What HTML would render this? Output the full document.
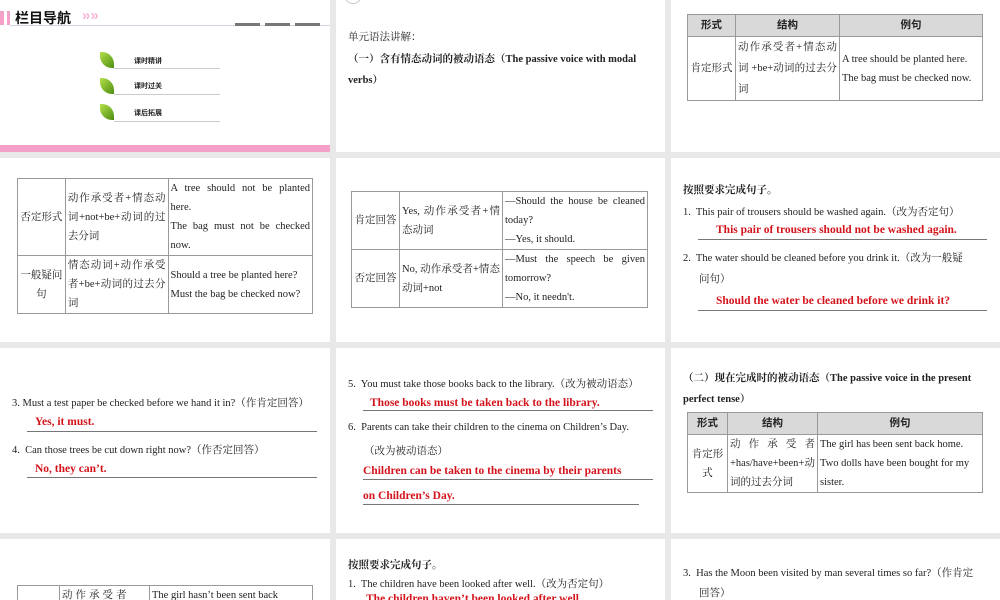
<!DOCTYPE html>
<html><head><meta charset="utf-8"><style>
*{margin:0;padding:0;box-sizing:border-box}
body{width:1000px;height:600px;background:#e9e8e9;position:relative;overflow:hidden;font-family:"Liberation Serif","Noto Serif CJK SC",serif;font-size:10.5px;color:#222}
.s{position:absolute;background:#fff;overflow:hidden}
.a{position:absolute;white-space:nowrap}
.r{color:#d4141c;font-weight:bold;font-size:11.5px}
.ul{position:absolute;height:1px;background:#777}
table{position:absolute;border-collapse:collapse;font-size:10.5px;line-height:19px}
td{border:1px solid #999;padding:0 2px;vertical-align:middle}
td.j{text-align:justify}
th{border:1px solid #999;background:#d9d9d9;font-weight:bold;font-family:"Liberation Sans","Noto Sans CJK SC",sans-serif;font-size:10.5px;height:22px}
.b{font-weight:bold}
.leaf{position:absolute;width:14px;height:16px;background:linear-gradient(135deg,#b4e04a,#4e8e12);border-radius:0 12px 0 12px}
.nav{position:absolute;left:114px;width:106px;height:1px;background:#ccc}
.nt{position:absolute;left:134px;font-size:7px;font-weight:bold;font-family:"Noto Sans CJK SC",sans-serif}
</style></head><body>

<!-- row1 -->
<div class="s" style="left:0;top:0;width:330px;height:152px">
  <div style="position:absolute;left:0;top:11px;width:4px;height:14px;background:#f5a0c8"></div>
  <div style="position:absolute;left:7px;top:11px;width:3px;height:14px;background:#f5a0c8"></div>
  <div class="a" style="left:15px;top:8px;font-family:'Liberation Sans','Noto Sans CJK SC',sans-serif;font-size:14px;font-weight:bold;color:#111">栏目导航</div>
  <div class="a" style="left:82px;top:7px;font-family:'Liberation Sans',sans-serif;font-size:15px;color:#f7b6d6;font-weight:bold">»»</div>
  <div style="position:absolute;left:10px;top:25px;width:320px;height:1px;background:#cfd6e0"></div>
  <div style="position:absolute;left:235px;top:23px;width:25px;height:3px;background:#777"></div>
  <div style="position:absolute;left:265px;top:23px;width:25px;height:3px;background:#777"></div>
  <div style="position:absolute;left:295px;top:23px;width:25px;height:3px;background:#777"></div>
  <div class="leaf" style="left:100px;top:52px"></div><div class="nt" style="top:56px">课时精讲</div><div class="nav" style="top:68px"></div>
  <div class="leaf" style="left:100px;top:78px"></div><div class="nt" style="top:81px">课时过关</div><div class="nav" style="top:94px"></div>
  <div class="leaf" style="left:100px;top:104px"></div><div class="nt" style="top:108px">课后拓展</div><div class="nav" style="top:121px"></div>
  <div style="position:absolute;left:0;top:145px;width:330px;height:7px;background:#f5a0c8"></div>
</div>
<div class="s" style="left:336px;top:0;width:329px;height:152px">
  <div style="position:absolute;left:8px;top:-14px;width:18px;height:18px;border-radius:50%;border:1px solid #ccc"></div>
  <div class="a" style="left:12px;top:29px">单元语法讲解：</div>
  <div class="a b" style="left:12px;top:51px">（一）含有情态动词的被动语态（The passive voice with modal</div>
  <div class="a b" style="left:12px;top:72px">verbs）</div>
</div>
<div class="s" style="left:671px;top:0;width:329px;height:152px">
  <table style="left:16px;top:14px;width:296px">
    <tr><th style="width:48px">形式</th><th style="width:104px">结构</th><th>例句</th></tr>
    <tr><td style="text-align:center">肯定形式</td><td class="j" style="line-height:21px">动作承受者+情态动词 +be+动词的过去分词</td><td>A tree should be planted here.<br>The bag must be checked now.</td></tr>
  </table>
</div>

<!-- row2 -->
<div class="s" style="left:0;top:158px;width:330px;height:184px">
  <table style="left:17px;top:20px;width:296px">
    <tr><td style="width:48px;text-align:center">否定形式</td><td class="j" style="width:103px">动作承受者+情态动词+not+be+动词的过去分词</td><td class="j" style="width:145px">A tree should not be planted here.<br>The bag must not be checked now.</td></tr>
    <tr><td style="text-align:center">一般疑问句</td><td class="j">情态动词+动作承受者+be+动词的过去分词</td><td>Should a tree be planted here?<br>Must the bag be checked now?</td></tr>
  </table>
</div>
<div class="s" style="left:336px;top:158px;width:329px;height:184px">
  <table style="left:15px;top:33px;width:297px">
    <tr><td style="width:48px;text-align:center">肯定回答</td><td class="j" style="width:103px">Yes, 动作承受者+情态动词</td><td class="j">—Should the house be cleaned today?<br>—Yes, it should.</td></tr>
    <tr><td style="text-align:center">否定回答</td><td class="j">No, 动作承受者+情态动词+not</td><td class="j">—Must the speech be given tomorrow?<br>—No, it needn't.</td></tr>
  </table>
</div>
<div class="s" style="left:671px;top:158px;width:329px;height:184px">
  <div class="a b" style="left:12px;top:24px">按照要求完成句子。</div>
  <div class="a" style="left:12px;top:46px">1.&nbsp; This pair of trousers should be washed again.（改为否定句）</div>
  <div class="a r" style="left:45px;top:66px">This pair of trousers should not be washed again.</div>
  <div class="ul" style="left:27px;top:81px;width:289px"></div>
  <div class="a" style="left:12px;top:92px">2.&nbsp; The water should be cleaned before you drink it.（改为一般疑</div>
  <div class="a" style="left:28px;top:113px">问句）</div>
  <div class="a r" style="left:45px;top:137px">Should the water be cleaned before we drink it?</div>
  <div class="ul" style="left:27px;top:152px;width:289px"></div>
</div>

<!-- row3 -->
<div class="s" style="left:0;top:348px;width:330px;height:185px">
  <div class="a" style="left:12px;top:47px">3.&nbsp;Must a test paper be checked before we hand it in?（作肯定回答）</div>
  <div class="a r" style="left:35px;top:68px">Yes, it must.</div>
  <div class="ul" style="left:27px;top:83px;width:290px"></div>
  <div class="a" style="left:12px;top:94px">4.&nbsp; Can those trees be cut down right now?（作否定回答）</div>
  <div class="a r" style="left:35px;top:115px">No, they can’t.</div>
  <div class="ul" style="left:27px;top:129px;width:290px"></div>
</div>
<div class="s" style="left:336px;top:348px;width:329px;height:185px">
  <div class="a" style="left:12px;top:28px">5.&nbsp; You must take those books back to the library.（改为被动语态）</div>
  <div class="a r" style="left:34px;top:49px">Those books must be taken back to the library.</div>
  <div class="ul" style="left:27px;top:62px;width:290px"></div>
  <div class="a" style="left:12px;top:74px">6.&nbsp; Parents can take their children to the cinema on Children’s Day.</div>
  <div class="a" style="left:28px;top:95px">（改为被动语态）</div>
  <div class="a r" style="left:27px;top:117px">Children can be taken to the cinema by their parents</div>
  <div class="ul" style="left:27px;top:131px;width:290px"></div>
  <div class="a r" style="left:27px;top:142px">on Children’s Day.</div>
  <div class="ul" style="left:27px;top:156px;width:276px"></div>
</div>
<div class="s" style="left:671px;top:348px;width:329px;height:185px">
  <div class="a b" style="left:12px;top:22px">（二）现在完成时的被动语态（The passive voice in the present</div>
  <div class="a b" style="left:12px;top:43px">perfect tense）</div>
  <table style="left:16px;top:64px;width:296px">
    <tr><th style="width:40px">形式</th><th style="width:90px">结构</th><th>例句</th></tr>
    <tr><td style="text-align:center">肯定形式</td><td class="j">动 作 承 受 者 +has/have+been+动词的过去分词</td><td>The girl has been sent back home. Two dolls have been bought for my sister.</td></tr>
  </table>
</div>

<!-- row4 -->
<div class="s" style="left:0;top:539px;width:330px;height:61px">
  <table style="left:17px;top:46px;width:296px">
    <tr><td style="width:42px"></td><td style="width:90px;letter-spacing:3px">动作承受者</td><td>The girl hasn’t been sent back</td></tr>
  </table>
</div>
<div class="s" style="left:336px;top:539px;width:329px;height:61px">
  <div class="a b" style="left:12px;top:18px">按照要求完成句子。</div>
  <div class="a" style="left:12px;top:37px">1.&nbsp; The children have been looked after well.（改为否定句）</div>
  <div class="a r" style="left:30px;top:54px">The children haven’t been looked after well.</div>
</div>
<div class="s" style="left:671px;top:539px;width:329px;height:61px">
  <div class="a" style="left:12px;top:26px">3.&nbsp; Has the Moon been visited by man several times so far?（作肯定</div>
  <div class="a" style="left:28px;top:46px">回答）</div>
</div>
</body></html>
